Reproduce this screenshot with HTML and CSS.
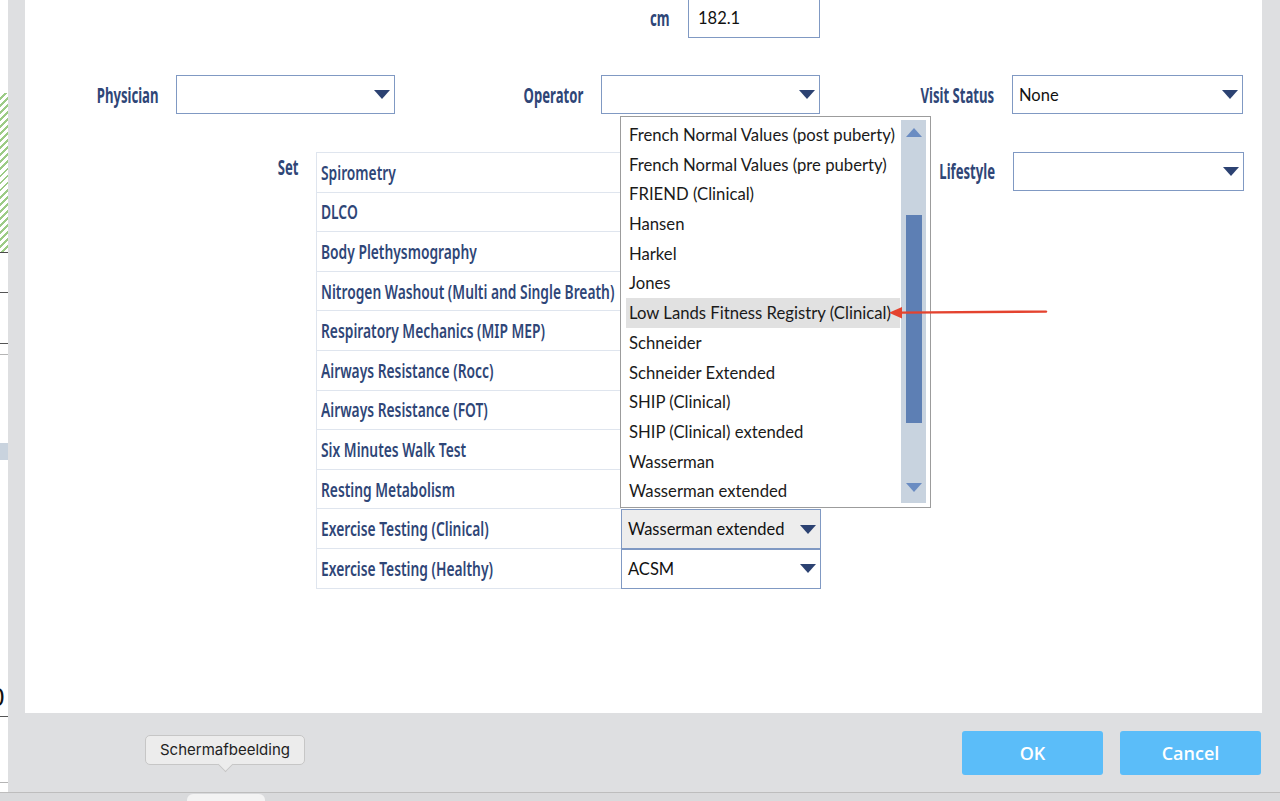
FILE: index.html
```html
<!DOCTYPE html>
<html lang="en">
<head>
    <meta charset="utf-8">
    <title>Test Settings</title>
    <link rel="stylesheet" href="styles.css">
</head>
<body>

<div class="screen">
    <div class="backdrop">
        <div class="hatch"></div>
        <div class="rule dark gap-39"></div>
        <div class="rule dark gap-50"></div>
        <div class="rule light gap-10"></div>
        <div class="chip"></div>
        <div class="stray-digit">0</div>
        <div class="rule dark gap-8"></div>
        <div class="rule light gap-65"></div>
    </div>

    <div class="dialog">
        <div class="panel">
            <div class="fields">
                <div class="height-field">
                    <span class="field-label"><span class="narrow">cm</span></span>
                    <div class="text-input">182.1</div>
                </div>

                <label class="field-label second-row"><span class="narrow">Physician</span></label>
                <div class="combo second-row"><span></span><span class="caret"></span></div>
                <label class="field-label second-row"><span class="narrow">Operator</span></label>
                <div class="combo second-row"><span></span><span class="caret"></span></div>
                <label class="field-label second-row"><span class="narrow">Visit Status</span></label>
                <div class="combo second-row"><span>None</span><span class="caret"></span></div>
            </div>

            <div class="set-row">
                <div class="field-label set-label"><span class="narrow">Set</span></div>
                <div class="set-table">
                    <div class="set-name"><span class="narrow">Spirometry</span></div><div class="set-value"></div>
                    <div class="set-name"><span class="narrow">DLCO</span></div><div class="set-value"></div>
                    <div class="set-name"><span class="narrow">Body Plethysmography</span></div><div class="set-value"></div>
                    <div class="set-name"><span class="narrow">Nitrogen Washout (Multi and Single Breath)</span></div><div class="set-value"></div>
                    <div class="set-name"><span class="narrow">Respiratory Mechanics (MIP MEP)</span></div><div class="set-value"></div>
                    <div class="set-name"><span class="narrow">Airways Resistance (Rocc)</span></div><div class="set-value"></div>
                    <div class="set-name"><span class="narrow">Airways Resistance (FOT)</span></div><div class="set-value"></div>
                    <div class="set-name"><span class="narrow">Six Minutes Walk Test</span></div><div class="set-value"></div>
                    <div class="set-name"><span class="narrow">Resting Metabolism</span></div><div class="set-value"></div>
                    <div class="set-name"><span class="narrow">Exercise Testing (Clinical)</span></div>
                    <div class="set-value"><div class="combo small open"><span>Wasserman extended</span><span class="caret"></span></div></div>
                    <div class="set-name"><span class="narrow">Exercise Testing (Healthy)</span></div>
                    <div class="set-value"><div class="combo small"><span>ACSM</span><span class="caret"></span></div></div>
                </div>
                <label class="field-label lifestyle-label"><span class="narrow">Lifestyle</span></label>
                <div class="combo lifestyle"><span></span><span class="caret"></span></div>
            </div>

            <div class="picker">
                <div class="picker-options">
                    <div class="opt">French Normal Values (post puberty)</div>
                    <div class="opt">French Normal Values (pre puberty)</div>
                    <div class="opt">FRIEND (Clinical)</div>
                    <div class="opt">Hansen</div>
                    <div class="opt">Harkel</div>
                    <div class="opt">Jones</div>
                    <div class="opt hover">Low Lands Fitness Registry (Clinical)</div>
                    <div class="opt">Schneider</div>
                    <div class="opt">Schneider Extended</div>
                    <div class="opt">SHIP (Clinical)</div>
                    <div class="opt">SHIP (Clinical) extended</div>
                    <div class="opt">Wasserman</div>
                    <div class="opt">Wasserman extended</div>
                </div>
                <div class="scrollbar">
                    <span class="arrow up"></span>
                    <span class="thumb"></span>
                    <span class="arrow down"></span>
                </div>
            </div>

            <svg class="callout" width="170" height="24" viewBox="0 0 170 24">
                <line x1="16" y1="12.6" x2="161" y2="11.6" stroke="#e4432f" stroke-width="2.4" stroke-linecap="round"/>
                <polygon points="4,12.7 17,7 17,18.4" fill="#e4432f"/>
            </svg>
        </div>

        <div class="footer">
            <div class="tip">Schermafbeelding</div>
            <button class="btn">OK</button>
            <button class="btn">Cancel</button>
        </div>
    </div>
</div>

<div class="dock-strip"><span class="dock-pill"></span></div>

</body>
</html>
```

FILE: styles.css
```css
body {
    margin: 0;
    width: 1280px;
    height: 801px;
    overflow: hidden;
    background: #fff;
    font-family: Lato, "Open Sans", sans-serif;
}

.screen {
    display: flex;
    height: 792px;
}

/* window peeking out behind the dialog */
.backdrop {
    width: 8px;
    flex: none;
    background: #fff;
    display: flex;
    flex-direction: column;
    overflow: hidden;
}
.hatch {
    margin-top: 93px;
    height: 159px;
    background: repeating-linear-gradient(135deg, #fff 0 3px, #9ccb86 3px 5px);
    border-bottom: 1px solid #4a4a4a;
}
.rule {
    height: 1px;
    flex: none;
}
.rule.dark { background: #555; }
.rule.light { background: #b5b5b5; }
.gap-39 { margin-top: 39px; }
.gap-50 { margin-top: 50px; }
.gap-10 { margin-top: 10px; }
.gap-8 { margin-top: 8px; }
.gap-65 { margin-top: 65px; }
.chip {
    margin-top: 88px;
    height: 17px;
    background: #c9d3de;
}
.stray-digit {
    margin-top: 226px;
    margin-left: -10px;
    font: 26px/22px "Liberation Sans", sans-serif;
    color: #111;
}

.dialog {
    flex: 1;
    background: #dedfe1;
    padding: 0 18px 0 17px;
    display: flex;
    flex-direction: column;
}
.panel {
    height: 713px;
    flex: none;
    background: #fff;
    position: relative;
}

/* no condensed face installed: squeeze the regular one */
.narrow {
    display: inline-block;
    transform: scaleX(0.64);
    transform-origin: right center;
}

.field-label {
    font-family: "Noto Sans", sans-serif;
    font-weight: 700;
    font-size: 20.5px;
    color: #2f4677;
    text-align: right;
    padding-right: 18px;
    align-self: center;
    white-space: nowrap;
}

.fields {
    margin-top: -2px;
    display: grid;
    grid-template-columns: 151px 219px 206px 219px 192px 231px;
    grid-template-rows: 40px 39px;
    row-gap: 37px;
}
.second-row {
    grid-row: 2;
}
.height-field {
    grid-column: 4;
    grid-row: 1;
    display: flex;
    justify-content: flex-end;
    align-items: center;
}
.text-input {
    width: 132px;
    height: 40px;
    box-sizing: border-box;
    border: 1px solid #8099c3;
    padding-left: 9px;
    font-size: 16.5px;
    line-height: 38px;
    color: #111;
}

.combo {
    height: 39px;
    box-sizing: border-box;
    border: 1px solid #8099c3;
    background: #fff;
    display: flex;
    align-items: center;
    justify-content: space-between;
    padding: 0 4px 0 6px;
    font-size: 16.5px;
    color: #111;
}
.caret {
    width: 0;
    height: 0;
    border-left: 8.5px solid transparent;
    border-right: 8.5px solid transparent;
    border-top: 9px solid #2c4272;
}

.set-row {
    margin-top: 38px;
    display: flex;
    align-items: flex-start;
}
.set-label {
    width: 291px;
    box-sizing: border-box;
    align-self: flex-start;
    line-height: 31px;
}
.set-table {
    width: 504px;
    display: grid;
    grid-template-columns: 304px 200px;
    grid-auto-rows: 39.6px;
    border-top: 1px solid #dfe5ee;
    border-left: 1px solid #dfe5ee;
}
.set-name {
    border-bottom: 1px solid #dfe5ee;
    padding-left: 4px;
    font-family: "Noto Sans", sans-serif;
    font-weight: 600;
    font-size: 20px;
    color: #2f4677;
    display: flex;
    align-items: center;
    white-space: nowrap;
    overflow: hidden;
}
.set-name .narrow {
    transform: scaleX(0.69);
    transform-origin: left center;
}
.set-value {
    display: flex;
}
.combo.small {
    flex: 1;
    height: 100%;
}
.combo.open {
    background: #ededed;
}
.lifestyle-label {
    width: 192px;
    box-sizing: border-box;
    align-self: flex-start;
    line-height: 39px;
}
.combo.lifestyle {
    width: 231px;
}

/* open drop-down list */
.picker {
    position: absolute;
    left: 595px;
    top: 116px;
    width: 311px;
    height: 392px;
    box-sizing: border-box;
    border: 1px solid #9c9c9c;
    background: #fff;
    display: flex;
    gap: 1px;
    padding: 3px 4px 4px 5px;
}
.picker-options {
    flex: 1;
}
.opt {
    height: 29.7px;
    box-sizing: border-box;
    padding: 2px 0 0 3px;
    line-height: 27.7px;
    font-size: 16.7px;
    color: #1a1a1a;
    white-space: nowrap;
}
.opt.hover {
    background: #e1e1e1;
}
.scrollbar {
    width: 25px;
    background: #c8d3df;
    display: flex;
    flex-direction: column;
    align-items: center;
    padding-top: 8px;
    box-sizing: border-box;
}
.arrow {
    width: 0;
    height: 0;
    border-left: 8px solid transparent;
    border-right: 8px solid transparent;
}
.arrow.up {
    border-bottom: 9px solid #6a8cc2;
}
.arrow.down {
    border-top: 9px solid #6a8cc2;
    margin-top: auto;
    margin-bottom: 11px;
}
.thumb {
    margin-top: 78px;
    width: 16px;
    height: 208px;
    background: #5d7fb4;
}

.callout {
    position: absolute;
    left: 860px;
    top: 300px;
}

.footer {
    flex: 1;
    position: relative;
    display: flex;
    justify-content: flex-end;
    align-items: flex-start;
    gap: 17px;
    padding: 18px 1px 0 0;
}
.btn {
    width: 141px;
    height: 44px;
    border: none;
    border-radius: 3px;
    background: #5bbdf9;
    color: #fff;
    font-family: "Open Sans", sans-serif;
    font-weight: 600;
    font-size: 18px;
    cursor: pointer;
}
.tip {
    position: absolute;
    left: 120px;
    top: 22px;
    width: 160px;
    height: 30px;
    box-sizing: border-box;
    border: 1px solid #c6c6c6;
    border-radius: 5px;
    background: #ececec;
    font-family: Inter, sans-serif;
    font-size: 15px;
    line-height: 28px;
    text-align: center;
    color: #222;
}
.tip::after {
    content: "";
    position: absolute;
    left: 74px;
    bottom: -6px;
    width: 10px;
    height: 10px;
    background: #ececec;
    border-right: 1px solid #c6c6c6;
    border-bottom: 1px solid #c6c6c6;
    transform: rotate(45deg);
}

.dock-strip {
    height: 9px;
    box-sizing: border-box;
    border-top: 1px solid #bdbdbd;
    background: #d9dadc;
    padding-left: 187px;
}
.dock-pill {
    display: block;
    width: 78px;
    height: 8px;
    margin-top: 1px;
    border-radius: 6px 6px 0 0;
    background: #f3f3f3;
}
```
